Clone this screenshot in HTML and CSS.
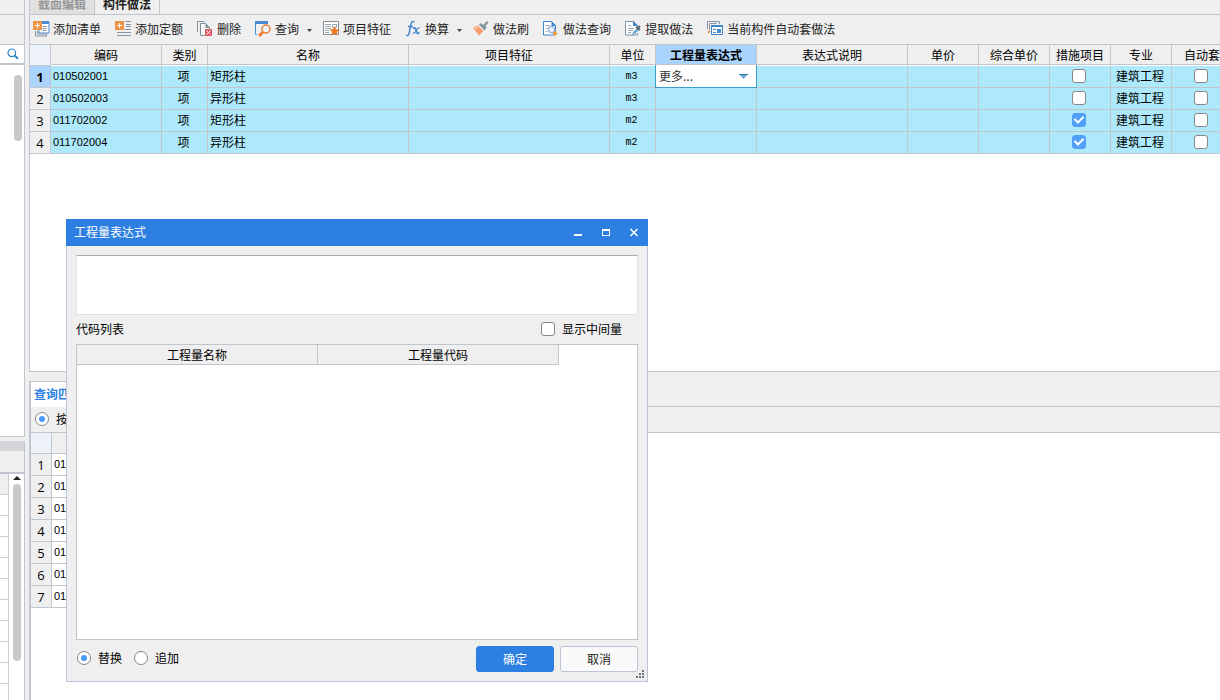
FILE: index.html
```html
<!DOCTYPE html>
<html lang="zh-CN">
<head>
<meta charset="utf-8">
<title>构件做法</title>
<link rel="stylesheet" href="styles.css">
</head>
<body>
<div class="app">
  <aside class="side">
    <section class="side-top">
      <div class="side-tabs"></div>
      <div class="side-tools"></div>
      <button class="side-search" aria-label="搜索">
        <svg width="12" height="12" viewBox="0 0 12 12" fill="none" stroke="#2a86bd"><circle cx="4.8" cy="4.8" r="3.8" stroke-width="1.2"/><path d="M7.6 7.6l3.4 3.2" stroke-width="2"/></svg>
      </button>
      <div class="side-scroll"><div class="thumb thumb-top"></div></div>
    </section>
    <section class="side-bottom">
      <div class="side-band"></div>
      <div class="side-head"></div>
      <div class="side-body">
        <div class="side-rows"><i></i><i></i><i></i><i></i><i></i><i></i><i></i><i></i><i></i><i></i><i></i></div>
        <div class="side-track">
          <svg width="8" height="4" viewBox="0 0 8 4"><path d="M0 4L4 0L8 4z" fill="#222"/></svg>
          <div class="thumb thumb-bottom"></div>
        </div>
      </div>
    </section>
  </aside>

  <main class="main">
    <section class="upper">
      <nav class="tabs">
        <button class="tab">截面编辑</button>
        <button class="tab tab-on">构件做法</button>
      </nav>
      <div class="toolbar">
        <button class="tool"><svg class="ico" viewBox="0 0 17 17"><path d="M6 2h10v11H6z" fill="#fff" stroke="#4a8bd6"/><path d="M6 1h10v3H6z" fill="#4a8bd6"/><path d="M9.500 6.500h4M9.500 8.500h4M9.500 10.500h4M2.500 11v5h11v-2M4.500 11v3h9" fill="none" stroke="#82909c"/><path d="M0 1h9v9H0z" fill="#ee9447"/><path d="M4.500 3v5M2 5.500h5" stroke="#fff"/></svg>添加清单</button>
        <button class="tool"><svg class="ico" viewBox="0 0 17 17"><path d="M10 1.500h6M11 4.500h5M11 6.500h5M10 9.500h6M2 12.500h14M2 15.500h14" stroke="#8794a1"/><path d="M0 1h9v9H0z" fill="#ee9447"/><path d="M4.500 3v5M2 5.500h5" stroke="#fff"/></svg>添加定额</button>
        <button class="tool"><svg class="ico" viewBox="0 0 17 17"><path d="M.5 12V1.500h7" fill="none" stroke="#82909c"/><path d="M3.500 3.500h5l4 4v8h-9z" fill="#f4f5f6" stroke="#82909c"/><path d="M8.500 3v5h4.500z" fill="#82909c"/><path d="M8 9h7v7H8z" fill="#dd5862"/><path d="M9.500 10.500l4 4m0-4l-4 4" stroke="#fff"/></svg>删除</button>
        <button class="tool"><svg class="ico" viewBox="0 0 17 17"><path d="M2 14.500H.5V2.500h12" fill="none" stroke="#4a8bd6"/><path d="M0 1h13v3H0z" fill="#4a8bd6"/><circle cx="11" cy="9" r="4" fill="#eef5fa" stroke="#ed7d31" stroke-width="1.500"/><path d="M8 12l-4 4" stroke="#ed7d31" stroke-width="3"/></svg>查询<svg class="drop" viewBox="0 0 5 3"><path d="M0 0h5L2.500 3z" fill="#444"/></svg></button>
        <button class="tool"><svg class="ico" viewBox="0 0 17 17"><path d="M.5 1.500h15v13H.5z" fill="#fff" stroke="#82909c"/><path d="M2 4.500h6M2 6.500h6M2 8.500h6M2 10.500h4M2 12.500h4M9.500 4.500h4v3h-4z" fill="none" stroke="#9aa5af"/><path d="M11.500 6l1.500 3.200 3.500.4-2.600 2.400.7 3.500-3.100-1.700-3.100 1.700.7-3.500L6.500 9.600l3.500-.4z" fill="#ef7622"/></svg>项目特征</button>
        <button class="tool"><svg class="ico" viewBox="0 0 17 17" fill="none" stroke="#4285cf"><path d="M9.500 2C7.500.5 6.300 2 5.800 5L4.300 12.500C4 15 3 16 1.200 15.200M3 6.500h5" stroke-width="1.500"/><path d="M8 8.500c2-1.500 2.700 0 3.200 2s1 4.500 3.300 2" stroke-width="1.700"/><path d="M14.800 7.800c-2-.6-2.800 1-3.500 2.700s-1.800 3.200-3.500 2.500" stroke-width="1.100"/></svg>换算<svg class="drop" viewBox="0 0 5 3"><path d="M0 0h5L2.500 3z" fill="#444"/></svg></button>
        <button class="tool"><svg class="ico" viewBox="0 0 17 17"><path d="M0 8l5-2.500 5.500 5.500L6 15.500z" fill="#f79c71"/><path d="M0 8l5-2.500 2 2L2 10z" fill="#ffb391"/><path d="M6 4.500l2-1.500 2 2L14 1l1.500 1.500-3 3.500 1 1.500-2 3z" fill="#8695a1"/></svg>做法刷</button>
        <button class="tool"><svg class="ico" viewBox="0 0 17 17"><path d="M.5 1.500h8l4 4v9.500h-12z" fill="#fff" stroke="#4285cf"/><path d="M8.500 1v5h4.500z" fill="#4285cf"/><path d="M2.500 5.500h4M2.500 8.500h2M2.500 11.500h2" stroke="#9aa5af"/><circle cx="8.500" cy="9.500" r="3.200" fill="#e8f1fa" stroke="#6a9ad2"/><path d="M12 10.500l1 2 2 1-2 1-1 2-1-2-2-1 2-1z" fill="#f59b22"/></svg>做法查询</button>
        <button class="tool"><svg class="ico" viewBox="0 0 17 17"><path d="M12.500 7V5.500l-4-4h-8V15h12v-2" fill="#fff" stroke="#7f91a5"/><path d="M8 1v5h5z" fill="#4285cf"/><path d="M3 5.500h3M3 8.500h6M3 10.500h5M3 12.500h3" stroke="#9aa5af"/><path d="M7 15.500l1-3.500 4-4 2 2-4 4z" fill="#6fa9c6"/><path d="M11 7l4 3M12.500 8.500l2.500-2.500" stroke="#56636f" stroke-width="2"/></svg>提取做法</button>
        <button class="tool"><svg class="ico" viewBox="0 0 17 17"><path d="M.5 9V1.500h12V4M2.500 10V3.500H10" fill="none" stroke="#8794a1"/><path d="M4.500 5.500h11v9h-11z" fill="#fff" stroke="#4285cf"/><path d="M4 5h12v2H4z" fill="#4285cf"/><path d="M6 9.500h3M6 12.500h3" stroke="#4285cf"/><path d="M10 9h4v4h-4z" fill="#4285cf"/><path d="M1 11h3l-3 3z" fill="#ef8b3a"/></svg>当前构件自动套做法</button>
      </div>
      <table class="grid">
        <colgroup><col class="w-no"><col class="w-code"><col class="w-s"><col class="w-xl"><col class="w-xl"><col class="w-s"><col class="w-expr"><col class="w-l"><col class="w-price"><col class="w-price"><col class="w-m"><col class="w-m"><col class="w-m"></colgroup>
        <thead>
          <tr><th class="corner"></th><th>编码</th><th>类别</th><th>名称</th><th>项目特征</th><th>单位</th><th class="th-on">工程量表达式</th><th>表达式说明</th><th>单价</th><th>综合单价</th><th>措施项目</th><th>专业</th><th>自动套</th></tr>
        </thead>
        <tbody>
          <tr class="first"><th class="no no-on">1</th><td class="code">010502001</td><td>项</td><td class="name">矩形柱</td><td></td><td class="unit">m3</td><td class="edit"><div class="combo"><select aria-label="工程量表达式"><option>更多...</option></select><svg class="combo-arrow" viewBox="0 0 9 5"><path d="M0 0h9L4.500 5z" fill="#68a8d2"/><path d="M0 .5h9" stroke="#2778ab"/></svg></div></td><td></td><td></td><td></td><td><input type="checkbox" aria-label="措施项目"></td><td>建筑工程</td><td><input type="checkbox" aria-label="自动套"></td></tr>
          <tr><th class="no">2</th><td class="code">010502003</td><td>项</td><td class="name">异形柱</td><td></td><td class="unit">m3</td><td></td><td></td><td></td><td></td><td><input type="checkbox" aria-label="措施项目"></td><td>建筑工程</td><td><input type="checkbox" aria-label="自动套"></td></tr>
          <tr><th class="no">3</th><td class="code">011702002</td><td>项</td><td class="name">矩形柱</td><td></td><td class="unit">m2</td><td></td><td></td><td></td><td></td><td><input type="checkbox" aria-label="措施项目" checked></td><td>建筑工程</td><td><input type="checkbox" aria-label="自动套"></td></tr>
          <tr><th class="no">4</th><td class="code">011702004</td><td>项</td><td class="name">异形柱</td><td></td><td class="unit">m2</td><td></td><td></td><td></td><td></td><td><input type="checkbox" aria-label="措施项目" checked></td><td>建筑工程</td><td><input type="checkbox" aria-label="自动套"></td></tr>
        </tbody>
      </table>
    </section>
    <div class="splitter"></div>
    <section class="lower">
      <nav class="query-tabs"><button class="query-tab">查询匹</button></nav>
      <div class="query-bar"><label class="opt"><input type="radio" name="by" checked>按</label></div>
      <table class="grid plain">
        <colgroup><col class="w-no"><col class="w-code"></colgroup>
        <thead><tr><th class="corner"></th><th></th></tr></thead>
        <tbody>
          <tr><th class="no">1</th><td class="code">01</td></tr>
          <tr><th class="no">2</th><td class="code">01</td></tr>
          <tr><th class="no">3</th><td class="code">01</td></tr>
          <tr><th class="no">4</th><td class="code">01</td></tr>
          <tr><th class="no">5</th><td class="code">01</td></tr>
          <tr><th class="no">6</th><td class="code">01</td></tr>
          <tr><th class="no">7</th><td class="code">01</td></tr>
        </tbody>
      </table>
    </section>
  </main>
</div>

<div class="dialog" role="dialog" aria-labelledby="dlg-title">
  <header class="dlg-title">
    <span id="dlg-title">工程量表达式</span>
    <div class="win-buttons">
      <button aria-label="最小化"><svg width="10" height="10" viewBox="0 0 10 10"><path d="M1 7h8v2H1z" fill="#fff"/></svg></button>
      <button aria-label="最大化"><svg width="10" height="10" viewBox="0 0 10 10"><path d="M1 2h8v7H1zM2 4v4h6V4z" fill="#fff" fill-rule="evenodd"/></svg></button>
      <button aria-label="关闭"><svg width="10" height="10" viewBox="0 0 10 10"><path d="M1.500 2l7 7m0-7l-7 7" stroke="#fff" stroke-width="1.500"/></svg></button>
    </div>
  </header>
  <div class="dlg-body">
    <textarea class="expr" aria-label="工程量表达式"></textarea>
    <div class="list-head">
      <span>代码列表</span>
      <label class="opt"><input type="checkbox">显示中间量</label>
    </div>
    <div class="list">
      <table class="grid list-grid">
        <thead><tr><th>工程量名称</th><th>工程量代码</th></tr></thead>
      </table>
    </div>
    <footer class="dlg-foot">
      <label class="opt"><input type="radio" name="mode" checked>替换</label>
      <label class="opt"><input type="radio" name="mode">追加</label>
      <button class="btn btn-ok">确定</button>
      <button class="btn">取消</button>
    </footer>
  </div>
  <svg class="grip" viewBox="0 0 8 8" fill="#6f757d"><path d="M6 0h2v2H6zM3 3h2v2H3zM6 3h2v2H6zM0 6h2v2H0zM3 6h2v2H3zM6 6h2v2H6z"/></svg>
</div>
</body>
</html>
```
FILE: styles.css
```css
* { box-sizing: border-box; }

:root {
  --line: #c1c5cd;
  --panel: #efefef;
  --blue: #2d80e2;
}

body {
  margin: 0;
  overflow: hidden;
  background: var(--panel);
  color: #000;
  font: 12px/16px "Noto Sans CJK SC", sans-serif;
}

button, select, textarea, input { font: inherit; color: inherit; margin: 0; }
button { border: 0; padding: 0; background: none; }
svg { display: block; flex: none; }

.app { display: flex; gap: 4px; height: 100vh; }

/* Left panel */
.side { display: flex; flex-direction: column; gap: 4px; width: 25px; flex: none; }
.side-top {
  flex: 437 1 0;
  display: flex;
  flex-direction: column;
  min-height: 0;
  overflow: hidden;
  border-right: 1px solid var(--line);
  border-bottom: 1px solid var(--line);
  background: #fff;
}
.side-tabs { height: 15px; background: var(--panel); border-bottom: 1px solid var(--line); }
.side-tools { height: 30px; background: var(--panel); border-bottom: 1px solid var(--line); }
.side-search {
  display: flex;
  align-items: center;
  height: 20px;
  padding-left: 7px;
  border-bottom: 2px solid var(--line);
}
.side-scroll { display: flex; justify-content: flex-end; padding: 10px 2px 0 0; }
.thumb { width: 8px; border-radius: 4px; background: #c9c9c9; }
.thumb-top { height: 66px; }
.side-bottom {
  flex: 259 1 0;
  display: flex;
  flex-direction: column;
  min-height: 0;
  overflow: hidden;
  border-right: 1px solid var(--line);
}
.side-band { height: 10px; flex: none; background: #d3d4da; }
.side-head { height: 23px; flex: none; border-bottom: 2px solid var(--line); }
.side-body { flex: 1; display: flex; background: #fff; min-height: 0; overflow: hidden; }
.side-rows { width: 9px; border-right: 1px solid #ccced3; }
.side-rows i { display: block; height: 21px; border-bottom: 1px solid #ccced3; }
.side-rows i:first-child { background: var(--panel); }
.side-track { flex: 1; display: flex; flex-direction: column; align-items: center; gap: 4px; padding-top: 2px; }
.thumb-bottom { height: 177px; }

/* Main panes */
.main { flex: 1; min-width: 0; display: flex; flex-direction: column; }
.upper, .lower { display: flex; flex-direction: column; min-height: 0; overflow: hidden; background: #fff; }
.upper { flex: 372 1 0; border-left: 1px solid var(--line); border-bottom: 1px solid var(--line); }
.lower { flex: 319 1 0; border-left: 2px solid var(--line); }
.splitter { height: 9px; }

.tabs {
  display: flex;
  align-items: flex-end;
  height: 15px;
  flex: none;
  background: var(--panel);
  border-bottom: 1px solid var(--line);
}
.tab {
  height: 20px;
  width: 65px;
  border-right: 1px solid var(--line);
  background: #e0e0e0;
  color: #979797;
  font-weight: bold;
}
.tab-on { background: var(--panel); color: #222; }

.toolbar {
  display: flex;
  align-items: center;
  gap: 14px;
  height: 30px;
  flex: none;
  padding: 0 0 2px 3px;
  background: var(--panel);
  border-bottom: 1px solid var(--line);
  color: #222;
}
.tool { display: flex; align-items: center; gap: 3px; white-space: nowrap; }
.ico { width: 17px; height: 17px; }
.drop { width: 5px; height: 3px; margin: 3px 0 0 5px; }
.tool:has(.drop) { margin-right: -3px; }

/* Data grids */
.grid { table-layout: fixed; width: 0; flex: none; border-collapse: separate; border-spacing: 0; }
.grid th, .grid td {
  padding: 0;
  border: solid var(--line);
  border-width: 0 1px 1px 0;
  text-align: center;
  font-weight: normal;
  white-space: nowrap;
}
.grid thead th { height: 20px; background: var(--panel); }
.grid thead .corner { background: #edf1f8; border-bottom-color: #edf1f8; }
.grid thead .th-on { background: #aad4fe; font-weight: bold; }
.grid tbody tr { height: 22px; }
.grid tbody td { padding: 0 2px 2px 0; background: #aee9fb; }
.grid tbody .first { height: 23px; }
.grid tbody .first td { border-top: 1px solid #fff; }
.grid .first .no { border-top: 1px solid var(--line); }
.grid .no { background: var(--panel); font: 13px/16px "Open Sans", sans-serif; }
.grid .no-on { background: #aad4fe; font-weight: bold; }
.grid tbody .code { text-align: left; padding-left: 2px; font: 11px/16px "Liberation Sans", sans-serif; }
.grid tbody .name { text-align: left; padding-left: 2px; }
.grid tbody .unit { padding-bottom: 0; font: 10px/16px "Liberation Mono", monospace; }
.grid.plain tbody td { background: #fff; }
.plain thead .corner { border-bottom-color: var(--line); }

.w-no { width: 21px; }
.w-code { width: 111px; }
.w-s { width: 46px; }
.w-m { width: 61px; }
.w-price { width: 71px; }
.w-expr { width: 101px; }
.w-l { width: 151px; }
.w-xl { width: 201px; }

.grid tbody .first .edit { padding: 0; background: #fff; border: 0; }
.combo { position: relative; border: solid #3c9fc9; border-width: 0 1px 1px 0; height: 23px; box-shadow: -1px 0 #3c9fc9; }
.combo select {
  appearance: none;
  display: block;
  width: 100%;
  height: 22px;
  padding: 0 0 0 3px;
  border: 0;
  background: none;
  color: #333;
}
.combo-arrow { position: absolute; right: 8px; top: 9px; width: 9px; height: 5px; }

input[type="checkbox"], input[type="radio"] {
  appearance: none;
  display: grid;
  place-content: center;
  width: 14px;
  height: 14px;
  flex: none;
  border: 1px solid #868686;
  border-radius: 3px;
  background: #fff;
}
.grid input { margin: 0 auto; }
input[type="radio"] { border-radius: 50%; }
input[type="radio"]:checked::after {
  content: "";
  width: 6px;
  height: 6px;
  border-radius: 50%;
  background: #4a9bf8;
}
input[type="checkbox"]:checked { border-color: #529ffa; background: #529ffa; }
input[type="checkbox"]:checked::after {
  content: "";
  width: 4px;
  height: 7px;
  margin-bottom: 2px;
  border: solid #fff;
  border-width: 0 2px 2px 0;
  transform: rotate(45deg);
}
.opt { display: flex; align-items: center; gap: 7px; }

/* Lower query pane */
.query-tabs { display: flex; height: 26px; flex: none; background: var(--panel); border-bottom: 1px solid var(--line); }
.query-tab { height: 26px; padding: 0 3px 2px; border-top: 1px solid var(--line); background: #fff; color: var(--blue); font-weight: bold; }
.query-bar { display: flex; align-items: center; height: 26px; flex: none; padding: 0 0 2px 4px; background: var(--panel); border-bottom: 1px solid var(--line); }
.plain thead .corner { height: 21px; }

/* Expression dialog */
.dialog {
  position: absolute;
  left: 66px;
  top: 219px;
  width: 582px;
  background: var(--panel);
}
.dlg-title {
  display: flex;
  align-items: center;
  justify-content: space-between;
  height: 27px;
  padding: 0 9px 2px 8px;
  background: var(--blue);
  color: #fff;
}
.win-buttons { display: flex; gap: 18px; }
.dlg-body { padding: 9px 9px 9px; border: solid #bcc5d5; border-width: 0 1px 1px; }
.expr {
  display: block;
  width: 100%;
  height: 60px;
  resize: none;
  border: 1px solid #dfe2ea;
  border-top-color: #a9abb0;
  outline: 0;
  background: #fff;
}
.list-head { display: flex; align-items: center; justify-content: space-between; height: 29px; padding: 0 16px 2px 0; }
.list { height: 296px; border: 1px solid var(--line); background: #fff; }
.list-grid { width: 482px; }
.dlg-foot { display: flex; align-items: center; gap: 6px; padding-top: 6px; }
.dlg-foot .opt { padding: 0 5px 2px 1px; }
.btn { width: 78px; height: 26px; border: 1px solid #bcc5d5; border-radius: 3px; background: #fafafa; color: #222; }
.btn-ok { margin-left: auto; border-color: var(--blue); background: var(--blue); color: #fff; }
.grip { position: absolute; right: 4px; bottom: 4px; width: 8px; height: 8px; }
```
